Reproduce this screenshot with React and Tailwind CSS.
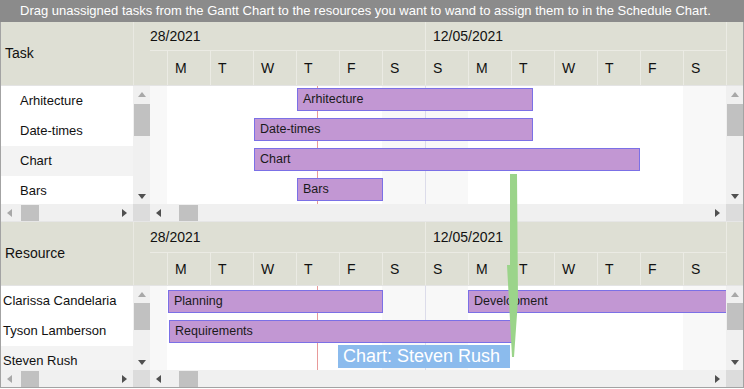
import React from "react";

const DAYS = ["M", "T", "W", "T", "F", "S", "S", "M", "T", "W", "T", "F", "S"];

function Tri({ dir, color }) {
  const pts = {
    up: "0,5 4,0 8,5",
    down: "0,0 8,0 4,5",
    left: "5,0 5,8 0,4",
    right: "0,0 0,8 5,4",
  }[dir];
  const vertical = dir === "up" || dir === "down";
  return (
    <svg width={vertical ? 8 : 5} height={vertical ? 5 : 8} className="block">
      <polygon points={pts} fill={color} />
    </svg>
  );
}

function VScroll({ h, thumbTop, thumbH }) {
  return (
    <div className="w-[17px] bg-[#f0f0f0] flex flex-col items-center shrink-0" style={{ height: h }}>
      <div className="h-[17px] flex items-center justify-center">
        <Tri dir="up" color="#a8a8a8" />
      </div>
      <div className="w-full flex-1 flex flex-col">
        <div style={{ height: thumbTop - 17 }} />
        <div className="bg-[#c1c1c1] w-[16px] mx-auto" style={{ height: thumbH }} />
      </div>
      <div className="h-[17px] flex items-center justify-center">
        <Tri dir="down" color="#505050" />
      </div>
    </div>
  );
}

function HScroll({ w, leftColor, thumbLeft, thumbW }) {
  return (
    <div className="h-[17px] bg-[#f0f0f0] flex items-center shrink-0" style={{ width: w }}>
      <div className="w-[17px] flex justify-center">
        <Tri dir="left" color={leftColor} />
      </div>
      <div style={{ width: thumbLeft - 17 }} />
      <div className="bg-[#c1c1c1] h-[16px]" style={{ width: thumbW }} />
      <div className="flex-1" />
      <div className="w-[17px] flex justify-center">
        <Tri dir="right" color="#505050" />
      </div>
    </div>
  );
}

function Bar({ left, width, top, label }) {
  return (
    <div
      className="absolute h-[23px] bg-[#c297d3] border border-[#7b70e6] text-[12.5px] text-[#1a1a1a] pl-[5px] flex items-center whitespace-nowrap overflow-hidden"
      style={{ left, width, top }}
    >
      {label}
    </div>
  );
}

function Section({ title, dateH, dayH, rows, bars, bodyH, vThumb, labelPad }) {
  return (
    <div className="flex flex-col">
      {/* header */}
      <div className="flex bg-[#dedfd4]" style={{ height: dateH + dayH }}>
        <div className="w-[132px] flex items-center pl-[4px] text-[14px] text-[#111]">{title}</div>
        <div className="w-[17px] border-l border-[#e9e9e2]" />
        <div className="w-[576px] flex flex-col overflow-hidden">
          <div className="flex items-center text-[14px] text-[#111]" style={{ height: dateH }}>
            <div className="w-[275px] h-full flex items-center">28/2021</div>
            <div className="w-[301px] h-full flex items-center pl-[7px] border-l border-[#ebebe4]">12/05/2021</div>
          </div>
          <div className="flex flex-1 border-t border-[#ebebe4] text-[14px] text-[#111]">
            <div className="w-[17px]" />
            {DAYS.map((d, i) => (
              <div key={i} className="w-[43px] flex items-center pl-[7px] border-l border-[#ebebe4]">
                {d}
              </div>
            ))}
          </div>
        </div>
        <div className="w-[17px] border-l border-[#ebebe4]" />
      </div>
      {/* body */}
      <div className="flex border-t border-[#e4e4e4]" style={{ height: bodyH }}>
        <div className="w-[132px] flex flex-col overflow-hidden bg-white">
          {rows.map((r, i) => (
            <div
              key={i}
              className={`h-[30px] shrink-0 flex items-center text-[13px] text-[#111] whitespace-nowrap ${r.hl ? "bg-[#f3f3f3]" : "bg-white"}`}
              style={{ paddingLeft: labelPad }}
            >
              {r.name}
            </div>
          ))}
        </div>
        <VScroll h={bodyH} thumbTop={vThumb[0]} thumbH={vThumb[1]} />
        <div className="w-[576px] relative overflow-hidden bg-white">
          <div className="flex h-full">
            <div className="w-[17px] bg-[#f8f8f8]" />
            {DAYS.map((d, i) => (
              <div
                key={i}
                className={`w-[43px] h-full ${i === 5 || i === 6 || i === 12 ? "bg-[#f8f8f8]" : ""} ${i === 6 ? "border-l border-[#dcdcea]" : ""}`}
              />
            ))}
          </div>
          <div className="absolute top-0 bottom-0 left-[167px] w-px bg-[#e89a9a]" />
          {bars.map((b, i) => (
            <Bar key={i} {...b} />
          ))}
        </div>
        <VScroll h={bodyH} thumbTop={vThumb[0]} thumbH={vThumb[1]} />
      </div>
      {/* horizontal scrollbars */}
      <div className="flex">
        <HScroll w={132} leftColor="#a8a8a8" thumbLeft={20} thumbW={18} />
        <div className="w-[17px] h-[17px] bg-[#dcdcdc]" />
        <HScroll w={576} leftColor="#505050" thumbLeft={29} thumbW={19} />
        <div className="w-[17px] h-[17px] bg-[#dcdcdc]" />
      </div>
    </div>
  );
}

export default function App() {
  return (
    <div className="relative w-[744px] h-[389px] overflow-hidden bg-white font-['Liberation_Sans',Arial,sans-serif]">
      <div className="h-[22px] bg-[#8b8b8b] text-white text-[13px] flex items-center pl-[20px] whitespace-nowrap">
        Drag unassigned tasks from the Gantt Chart to the resources you want to wand to assign them to in the Schedule Chart.
      </div>
      <div className="border-x border-b border-[#a3a3a3] flex flex-col">
        <Section
          title="Task"
          dateH={28}
          dayH={35}
          bodyH={119}
          vThumb={[18, 32]}
          labelPad={19}
          rows={[
            { name: "Arhitecture" },
            { name: "Date-times" },
            { name: "Chart", hl: true },
            { name: "Bars" },
          ]}
          bars={[
            { left: 147, width: 236, top: 2, label: "Arhitecture" },
            { left: 104, width: 279, top: 32, label: "Date-times" },
            { left: 104, width: 386, top: 62, label: "Chart" },
            { left: 147, width: 86, top: 92, label: "Bars" },
          ]}
        />
        <div className="h-px bg-[#e6e6e6]" />
        <Section
          title="Resource"
          dateH={30}
          dayH={33}
          bodyH={85}
          vThumb={[17, 27]}
          labelPad={2}
          rows={[
            { name: "Clarissa Candelaria" },
            { name: "Tyson Lamberson" },
            { name: "Steven Rush", hl: true },
          ]}
          bars={[
            { left: 18, width: 215, top: 4, label: "Planning" },
            { left: 318, width: 262, top: 4, label: "Development" },
            { left: 19, width: 344, top: 34, label: "Requirements" },
          ]}
        />
      </div>
      {/* drag overlay */}
      <svg className="absolute left-0 top-0 pointer-events-none" width="744" height="389">
        <polygon points="510,174 517,174 518,300 514,357 512,357 507,265 510,265" fill="#9bd48a" />
      </svg>
      <div className="absolute left-[338px] top-[345px] w-[172px] h-[23px] bg-[#8bbbed] text-white text-[18px] leading-[23px] pl-[5px] whitespace-nowrap">
        Chart: Steven Rush
      </div>
    </div>
  );
}
